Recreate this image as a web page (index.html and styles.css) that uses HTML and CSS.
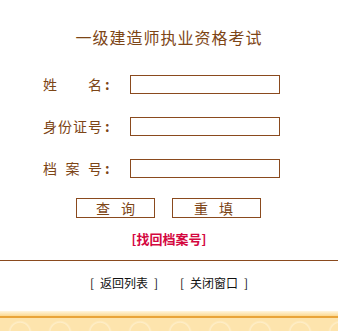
FILE: index.html
```html
<!DOCTYPE html>
<html lang="zh-CN">
<head>
<meta charset="utf-8">
<title>一级建造师执业资格考试</title>
<link rel="stylesheet" href="styles.css">
</head>
<body>
<div class="page">
  <h1 class="title">一级建造师执业资格考试</h1>
  <form class="form">
    <div class="row">
      <label class="label"><span class="chars"><span>姓</span><span>名</span></span><span class="colon">:</span></label>
      <input class="field" type="text">
    </div>
    <div class="row">
      <label class="label"><span class="chars"><span>身</span><span>份</span><span>证</span><span>号</span></span><span class="colon">:</span></label>
      <input class="field" type="text">
    </div>
    <div class="row">
      <label class="label"><span class="chars"><span>档</span><span>案</span><span>号</span></span><span class="colon">:</span></label>
      <input class="field" type="text">
    </div>
    <div class="buttons">
      <button class="btn btn-query" type="button"><span>查</span><span>询</span></button>
      <button class="btn btn-reset" type="button"><span>重</span><span>填</span></button>
    </div>
    <div class="find"><a class="find-link" href="#">[找回档案号]</a></div>
  </form>
  <hr class="rule">
  <div class="links">
    <a class="nav" href="#"><span class="br-l">[</span><span class="nav-text">返回列表</span><span class="br-r">]</span></a>
    <a class="nav" href="#"><span class="br-l">[</span><span class="nav-text">关闭窗口</span><span class="br-r">]</span></a>
  </div>
  <div class="footer"><div class="footer-top"></div><div class="footer-line"></div><div class="footer-pattern"></div></div>
</div>
</body>
</html>
```

FILE: styles.css
```css
html, body {
  margin: 0;
  padding: 0;
  background: #ffffff;
}
body {
  font-family: "Noto Sans CJK SC", "Noto Sans", sans-serif;
  color: #7d4516;
}
.page {
  width: 338px;
  height: 331px;
  display: flex;
  flex-direction: column;
  overflow: hidden;
}
.title {
  margin: 28px 0 0 0;
  height: 19px;
  font-size: 16px;
  line-height: 19px;
  font-weight: normal;
  text-align: center;
  letter-spacing: 1px;
  color: #7d4516;
}
.form {
  margin: 28px 0 0 0;
  display: flex;
  flex-direction: column;
}
.row {
  display: flex;
  align-items: flex-start;
  height: 42px;
  padding-left: 43px;
}
.label {
  width: 87px;
  display: flex;
  align-items: center;
  height: 19px;
  font-size: 14px;
  line-height: 19px;
}
.chars {
  width: 59px;
  display: flex;
  justify-content: space-between;
}
.colon {
  margin-left: 3px;
  font-size: 14px;
  font-weight: bold;
}
.field {
  box-sizing: border-box;
  width: 150px;
  height: 19px;
  margin: 0;
  padding: 0 2px;
  border: 1px solid #8a4a1e;
  background: #ffffff;
  outline: none;
}
.buttons {
  margin-top: -3px;
  display: flex;
  padding-left: 76px;
  gap: 17px;
}
.btn {
  box-sizing: border-box;
  height: 20px;
  margin: 0;
  padding: 0;
  border: 1px solid #8a4a1e;
  background: #ffffff;
  color: #7d4516;
  font-family: "Noto Sans CJK SC", "Noto Sans", sans-serif;
  font-size: 14px;
  line-height: 18px;
  display: flex;
  justify-content: center;
  align-items: center;
  gap: 11px;
}
.btn-query {
  width: 79px;
}
.btn-reset {
  width: 89px;
  padding-right: 6px;
}
.find {
  margin-top: 11px;
  text-align: center;
  height: 16px;
  line-height: 16px;
}
.find-link {
  font-size: 13px;
  font-weight: bold;
  color: #d4073f;
  text-decoration: none;
}
.rule {
  margin: 15px 0 0 0;
  border: 0;
  height: 1px;
  background: #8a4a1e;
}
.links {
  margin-top: 15px;
  display: flex;
  justify-content: center;
  gap: 22px;
  height: 14px;
}
.nav {
  display: flex;
  color: #111111;
  text-decoration: none;
  font-size: 12px;
  line-height: 14px;
}
.br-l {
  width: 10px;
  text-align: left;
}
.br-r {
  width: 10px;
  text-align: right;
}
.nav-text {
  width: 48px;
}
.footer {
  margin-top: auto;
  height: 20px;
  display: flex;
  flex-direction: column;
}
.footer-top {
  height: 5px;
  background: linear-gradient(#fff6e0, #fcd991);
}
.footer-line {
  height: 2px;
  background: #e9a43a;
}
.footer-pattern {
  flex: 1;
  background-color: #fde4ad;
  background-image: radial-gradient(circle at 50% 110%, rgba(255,255,255,0) 9px, rgba(255,246,222,0.55) 10px, rgba(255,255,255,0) 12px);
  background-size: 40px 13px;
}
```
